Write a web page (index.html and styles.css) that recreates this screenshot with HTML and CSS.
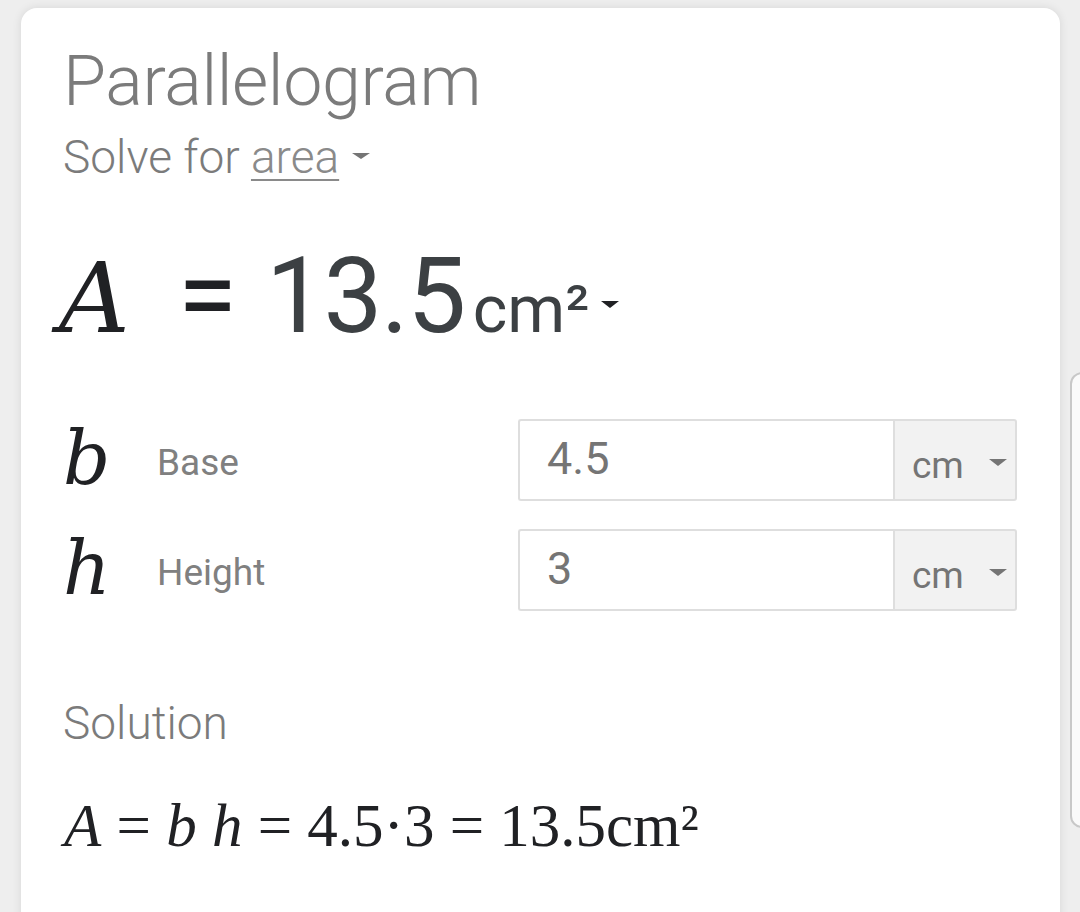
FILE: index.html
```html
<!DOCTYPE html>
<html>
<head>
<meta charset="utf-8">
<link rel="stylesheet" href="styles.css">
</head>
<body>
<div class="card">
  <h1 class="title">Parallelogram</h1>
  <div class="subtitle">Solve for <span class="link">area</span><span class="caret small"></span></div>
  <div class="result">
    <span class="var-big">A</span>
    <span class="eq">=</span>
    <span class="value">13.5</span>
    <span class="unit">cm²</span>
    <span class="caret dark"></span>
  </div>
  <div class="rows">
    <div class="row">
      <span class="var">b</span>
      <span class="label">Base</span>
      <div class="input">4.5</div>
      <div class="select"><span>cm</span><span class="caret gray"></span></div>
    </div>
    <div class="row">
      <span class="var">h</span>
      <span class="label">Height</span>
      <div class="input">3</div>
      <div class="select"><span>cm</span><span class="caret gray"></span></div>
    </div>
  </div>
  <div class="solution">Solution</div>
  <div class="formula"><i>A</i> = <i>b</i> <i>h</i> = 4.5·3 = 13.5cm²</div>
</div>
<div class="side-card"></div>
</body>
</html>
```
FILE: styles.css
```css
html, body {
  margin: 0;
  padding: 0;
  height: 100%;
  overflow: hidden;
}
body {
  background: #eeeeee;
  font-family: Roboto, "Liberation Sans", sans-serif;
  position: relative;
}
.card {
  margin: 8px 0 0 21px;
  width: 997px;
  height: 960px;
  padding: 38px 0 0 42px;
  background: #ffffff;
  border-radius: 16px;
  box-shadow: 0 0 10px rgba(0,0,0,0.10);
  display: flex;
  flex-direction: column;
}
.title {
  margin: 0;
  font-weight: 300;
  font-size: 70px;
  line-height: 70px;
  color: #7b7b7b;
  letter-spacing: -0.4px;
}
.subtitle {
  margin-top: 19px;
  font-weight: 300;
  font-size: 46px;
  line-height: 44px;
  color: #7b7b7b;
  display: flex;
  align-items: baseline;
  white-space: pre;
}
.link {
  text-decoration: underline;
  text-decoration-thickness: 2px;
  text-underline-offset: 6px;
  color: #8a8a8a;
}
.caret {
  display: inline-block;
  width: 0;
  height: 0;
  border-left: 9px solid transparent;
  border-right: 9px solid transparent;
  border-top: 7px solid #757575;
}
.caret.small {
  margin-left: 13px;
  border-left-width: 9px;
  border-right-width: 9px;
  border-top-width: 6px;
  align-self: center;
  transform: translateY(-1px);
}
.result {
  margin-top: 56px;
  display: flex;
  align-items: baseline;
  height: 110px;
}
.var-big {
  font-family: "DejaVu Serif", serif;
  font-style: italic;
  font-size: 98px;
  color: #202124;
  margin-left: -4px;
}
.eq {
  font-size: 108px;
  line-height: 1;
  color: #202124;
  margin-left: 48px;
}
.value {
  font-size: 105px;
  color: #3c4043;
  margin-left: 29px;
  letter-spacing: -1.5px;
}
.unit {
  font-size: 66px;
  color: #3c4043;
  margin-left: 8px;
}
.caret.dark {
  border-top-color: #202124;
  margin-left: 12px;
  transform: translateY(-24px);
}
.rows {
  margin-top: 74px;
  display: flex;
  flex-direction: column;
  gap: 28px;
}
.row {
  display: grid;
  grid-template-columns: 94px 361px 375px 124px;
  height: 82px;
  align-items: center;
}
.var {
  font-family: "DejaVu Serif", serif;
  font-style: italic;
  font-size: 74px;
  color: #202124;
  line-height: 82px;
  transform: translateY(-2px);
}
.label {
  font-size: 37px;
  color: #808080;
  padding-top: 4px;
}
.input {
  box-sizing: border-box;
  height: 82px;
  border: 2px solid #dedede;
  border-right: none;
  border-radius: 3px 0 0 3px;
  padding-left: 27px;
  font-size: 45px;
  line-height: 76px;
  color: #757575;
}
.select {
  box-sizing: border-box;
  height: 82px;
  border: 2px solid #dedede;
  border-radius: 0 3px 3px 0;
  background: #f2f2f2;
  padding: 10px 0 0 17px;
  display: flex;
  align-items: center;
  font-size: 37px;
  color: #757575;
}
.select .caret {
  margin-left: 25px;
  margin-top: -6px;
}
.solution {
  margin-top: 90px;
  font-weight: 300;
  font-size: 46px;
  line-height: 44px;
  color: #7b7b7b;
}
.formula {
  margin-top: 51px;
  margin-left: 1px;
  font-family: "Liberation Serif", serif;
  font-size: 61px;
  line-height: 60px;
  color: #202124;
  white-space: pre;
}
.side-card {
  position: absolute;
  left: 1070px;
  top: 372px;
  width: 40px;
  height: 452px;
  border: 2px solid #c8c8c8;
  border-radius: 12px;
  background: #fafafa;
}
```
